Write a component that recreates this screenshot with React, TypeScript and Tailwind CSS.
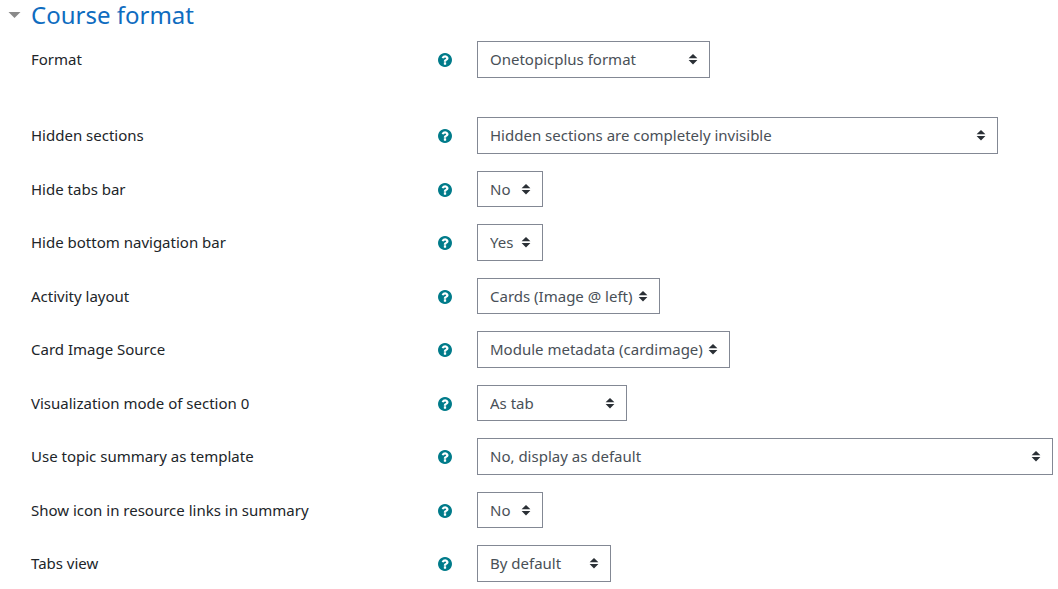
import { useState } from "react";

type Field = {
  id: string;
  label: string;
  width: string;
  options: string[];
  value: string;
  spaced?: boolean;
};

const yesNo = ["No", "Yes"];

const fields: Field[] = [
  { id: "format", label: "Format", width: "w-[233px]", options: ["Onetopicplus format", "Topics format", "Weekly format"], value: "Onetopicplus format", spaced: true },
  { id: "hiddensections", label: "Hidden sections", width: "w-[521px]", options: ["Hidden sections are completely invisible", "Hidden sections are shown in collapsed form"], value: "Hidden sections are completely invisible" },
  { id: "hidetabsbar", label: "Hide tabs bar", width: "w-[66px]", options: yesNo, value: "No" },
  { id: "hidebottomnav", label: "Hide bottom navigation bar", width: "w-[66px]", options: yesNo, value: "Yes" },
  { id: "activitylayout", label: "Activity layout", width: "w-[183px]", options: ["Cards (Image @ left)", "List"], value: "Cards (Image @ left)" },
  { id: "cardimage", label: "Card Image Source", width: "w-[253px]", options: ["Module metadata (cardimage)", "None"], value: "Module metadata (cardimage)" },
  { id: "sectionzero", label: "Visualization mode of section 0", width: "w-[150px]", options: ["As tab", "Above the tabs"], value: "As tab" },
  { id: "templatetopic", label: "Use topic summary as template", width: "w-[576px]", options: ["No, display as default", "Yes"], value: "No, display as default" },
  { id: "templateicons", label: "Show icon in resource links in summary", width: "w-[66px]", options: yesNo, value: "No" },
  { id: "tabsview", label: "Tabs view", width: "w-[134px]", options: ["By default", "Vertical"], value: "By default" },
];

function HelpIcon() {
  return (
    <svg viewBox="128 128 1536 1536" aria-hidden="true" className="size-3.5 fill-current">
      <path d="M1024 1376v-192q0-14-9-23t-23-9h-192q-14 0-23 9t-9 23v192q0 14 9 23t23 9h192q14 0 23-9t9-23zm256-672q0-88-55.5-163t-138.5-116-170-41q-243 0-371 213-15 24 8 42l132 100q7 6 19 6 16 0 25-12 53-68 86-92 34-24 86-24 48 0 85.500 26t37.500 59q0 38-20 61t-68 45q-63 28-115.500 86.500t-52.500 125.500v36q0 14 9 23t23 9h192q14 0 23-9t9-23q0-19 21.500-49.500t54.500-49.500q32-18 49-28.500t46-35 44.500-48 28-60.500 12.500-81zm384 192q0 209-103 385.500t-279.500 279.500-385.500 103-385.500-103-279.500-279.500-103-385.500 103-385.500 279.500-279.500 385.500-103 385.500 103 279.500 279.500 103 385.500z" />
    </svg>
  );
}

function FieldRow({ field }: { field: Field }) {
  return (
    <div className={`grid grid-cols-[421fr_576fr] items-center gap-[25px] ${field.spaced ? "mb-[1.5em]" : ""}`}>
      <div className="flex items-center justify-between">
        <label htmlFor={field.id}>{field.label}</label>
        <button type="button" aria-label={`Help with ${field.label}`} className="pt-0.5 text-[#007b8a]">
          <HelpIcon />
        </button>
      </div>
      <div className={`relative max-w-full ${field.width}`}>
        <select
          id={field.id}
          defaultValue={field.value}
          className="block w-full appearance-none border border-[#838894] bg-white py-1.5 pl-3 pr-6 leading-normal text-[#495057]"
        >
          {field.options.map((option) => (
            <option key={option}>{option}</option>
          ))}
        </select>
        <svg
          viewBox="0 0 8 10"
          aria-hidden="true"
          className="pointer-events-none absolute inset-y-0 right-[13px] my-auto h-2.5 w-2 overflow-visible fill-[#2b3036]"
        >
          <path d="M4 0L-0.4 4.3h8.8zM4 10.400L-0.4 6h8.8z" />
        </svg>
      </div>
    </div>
  );
}

export default function App() {
  const [open, setOpen] = useState(true);

  return (
    <form className="bg-white pl-2 pr-[5px] pb-2 font-['Noto_Sans','Open_Sans',sans-serif] text-[15px] leading-normal text-[#212529]">
      <h3 className="text-2xl leading-[30px] text-[#0f6cbf]">
        <button type="button" aria-expanded={open} onClick={() => setOpen(!open)} className="flex items-center">
          <svg viewBox="0 0 12 6" aria-hidden="true" className={`mr-[10px] h-1.5 w-[13px] fill-[#8a8a8a] ${open ? "" : "-rotate-90"}`}>
            <path d="M0 0h12L6 6z" />
          </svg>
          Course format
        </button>
      </h3>
      {open && (
        <div className="mt-[11px] flex flex-col gap-[17px] pl-[23px]">
          {fields.map((field) => (
            <FieldRow key={field.id} field={field} />
          ))}
        </div>
      )}
    </form>
  );
}
